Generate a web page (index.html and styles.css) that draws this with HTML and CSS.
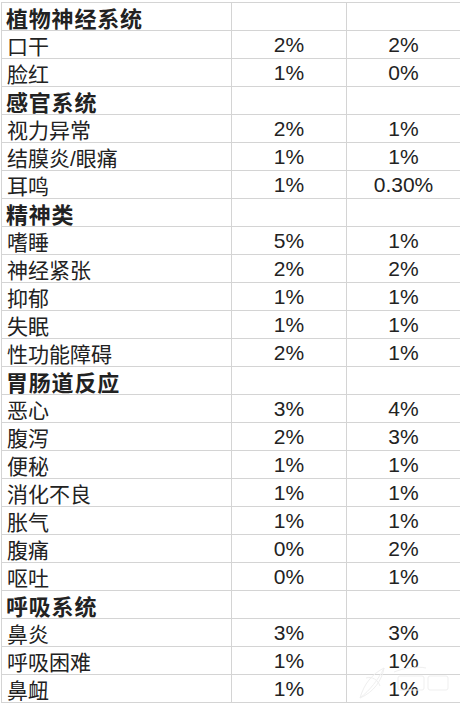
FILE: index.html
```html
<!DOCTYPE html>
<html lang="zh-CN">
<head>
<meta charset="utf-8">
<title>不良反应</title>
<link rel="stylesheet" href="styles.css">
</head>
<body>
<div class="sheet">
  <div class="grid">
    <div class="cell name head">植物神经系统</div><div class="cell num"></div><div class="cell num"></div>
    <div class="cell name">口干</div><div class="cell num">2%</div><div class="cell num">2%</div>
    <div class="cell name">脸红</div><div class="cell num">1%</div><div class="cell num">0%</div>
    <div class="cell name head">感官系统</div><div class="cell num"></div><div class="cell num"></div>
    <div class="cell name">视力异常</div><div class="cell num">2%</div><div class="cell num">1%</div>
    <div class="cell name">结膜炎/眼痛</div><div class="cell num">1%</div><div class="cell num">1%</div>
    <div class="cell name">耳鸣</div><div class="cell num">1%</div><div class="cell num">0.30%</div>
    <div class="cell name head">精神类</div><div class="cell num"></div><div class="cell num"></div>
    <div class="cell name">嗜睡</div><div class="cell num">5%</div><div class="cell num">1%</div>
    <div class="cell name">神经紧张</div><div class="cell num">2%</div><div class="cell num">2%</div>
    <div class="cell name">抑郁</div><div class="cell num">1%</div><div class="cell num">1%</div>
    <div class="cell name">失眠</div><div class="cell num">1%</div><div class="cell num">1%</div>
    <div class="cell name">性功能障碍</div><div class="cell num">2%</div><div class="cell num">1%</div>
    <div class="cell name head">胃肠道反应</div><div class="cell num"></div><div class="cell num"></div>
    <div class="cell name">恶心</div><div class="cell num">3%</div><div class="cell num">4%</div>
    <div class="cell name">腹泻</div><div class="cell num">2%</div><div class="cell num">3%</div>
    <div class="cell name">便秘</div><div class="cell num">1%</div><div class="cell num">1%</div>
    <div class="cell name">消化不良</div><div class="cell num">1%</div><div class="cell num">1%</div>
    <div class="cell name">胀气</div><div class="cell num">1%</div><div class="cell num">1%</div>
    <div class="cell name">腹痛</div><div class="cell num">0%</div><div class="cell num">2%</div>
    <div class="cell name">呕吐</div><div class="cell num">0%</div><div class="cell num">1%</div>
    <div class="cell name head">呼吸系统</div><div class="cell num"></div><div class="cell num"></div>
    <div class="cell name">鼻炎</div><div class="cell num">3%</div><div class="cell num">3%</div>
    <div class="cell name">呼吸困难</div><div class="cell num">1%</div><div class="cell num">1%</div>
    <div class="cell name">鼻衄</div><div class="cell num">1%</div><div class="cell num">1%</div>
  </div>
  <svg class="mark" width="100" height="44" viewBox="0 0 100 44" aria-hidden="true">
    <g fill="none" stroke="#efefef" stroke-width="1">
      <path d="M6 40 C10 26 18 16 30 10 C28 22 20 34 6 40 Z"/>
      <path d="M6 40 C16 32 24 22 30 10"/>
      <path d="M12 20 C18 18 24 22 26 28"/>
      <path d="M40 14 C50 10 62 8 72 10"/>
      <rect x="44" y="18" width="26" height="14" rx="2"/>
      <rect x="74" y="18" width="20" height="14" rx="2"/>
    </g>
  </svg>
</div>
</body>
</html>
```
FILE: styles.css
```css
html, body {
  margin: 0;
  padding: 0;
  background: #ffffff;
  overflow: hidden;
}

.sheet {
  position: relative;
  padding: 2px 0 0 1px;
  width: 460px;
  height: 704px;
  box-sizing: border-box;
}

.grid {
  display: grid;
  grid-template-columns: 230px 115px 114px;
  grid-auto-rows: 28px;
  border-top: 1px solid #d4d4d4;
}

.cell {
  box-sizing: border-box;
  border-left: 1px solid #d4d4d4;
  border-bottom: 1px solid #d4d4d4;
  display: flex;
  align-items: center;
  font-family: "Liberation Sans", "Noto Sans CJK SC", sans-serif;
  font-size: 21px;
  color: #222222;
  white-space: nowrap;
}

.name {
  padding-left: 5px;
  padding-top: 1px;
}

.head {
  font-weight: bold;
  font-size: 22px;
  letter-spacing: 0.8px;
  padding-left: 4px;
}

.num {
  justify-content: center;
  font-size: 21px;
  padding-top: 1px;
}

.mark {
  position: absolute;
  left: 354px;
  top: 658px;
}
```
